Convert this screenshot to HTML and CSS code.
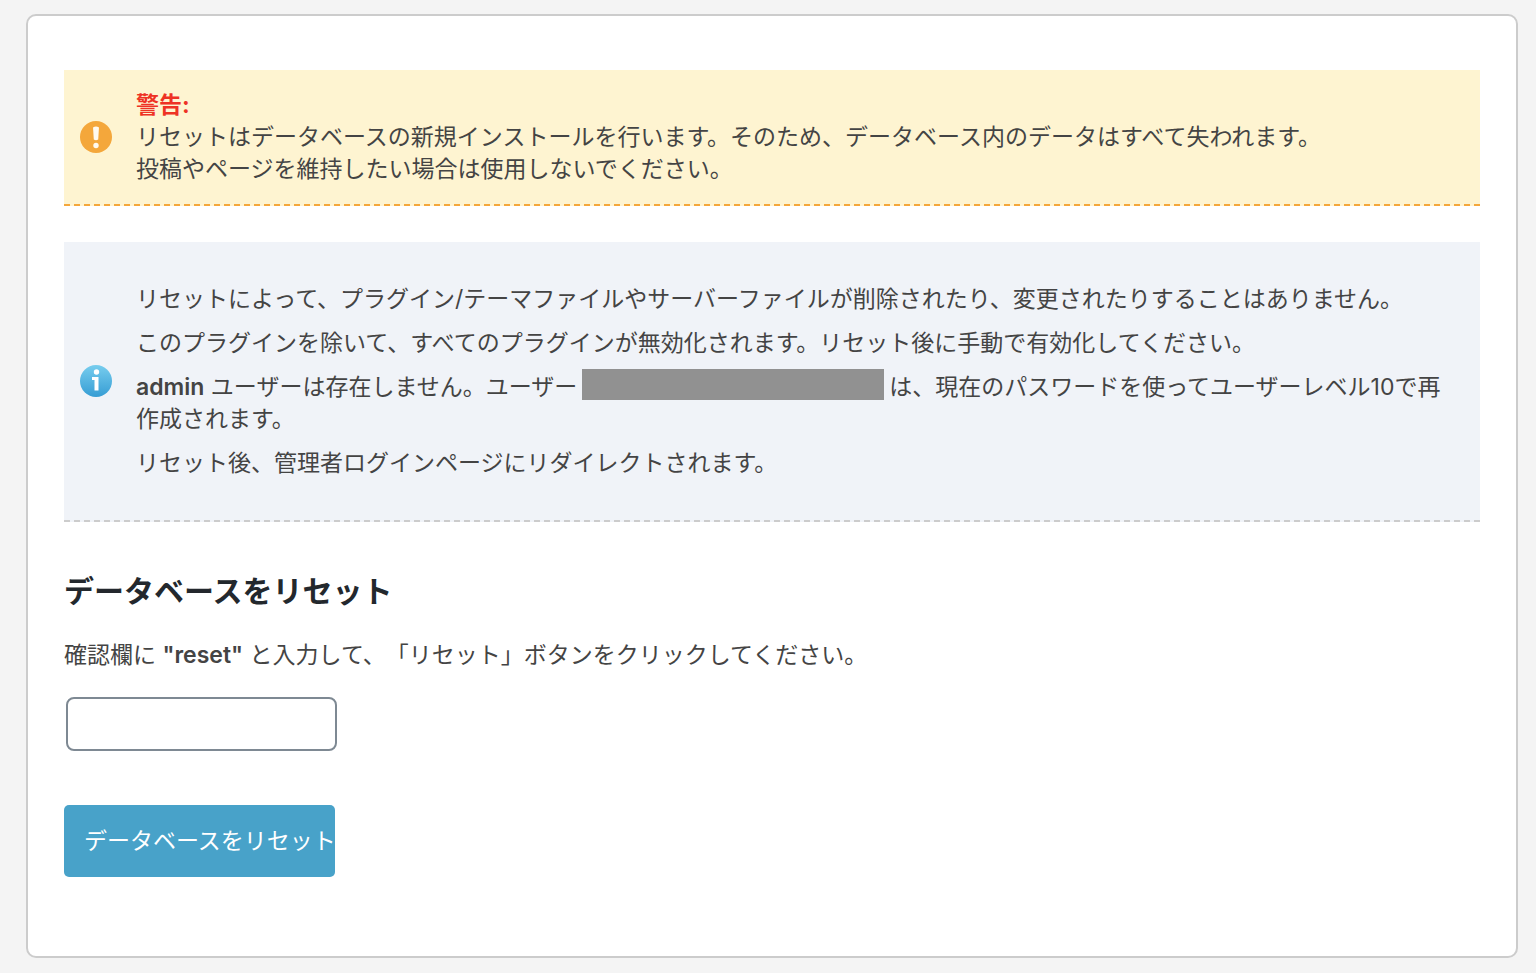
FILE: index.html
```
<!DOCTYPE html>
<html lang="ja">
<head>
  <meta charset="UTF-8" />
  <meta name="viewport" content="width=device-width, initial-scale=1.0"/>
  <title>データベースをリセット</title>
  <link rel="stylesheet" href="styles.css">
</head>
<body>
  <div class="card">
    <div class="notice warning">
      <svg class="icon" viewBox="0 0 34 34" aria-hidden="true">
        <circle cx="17" cy="17" r="16" fill="#f4a73b"/>
        <path d="M14 7.5Q17 5.5 20 7.5L19.2 19.5Q17 21 14.8 19.5Z" fill="#fffaf0"/>
        <circle cx="17" cy="25.5" r="2.7" fill="#fffaf0"/>
      </svg>
      <div class="notice-text">
        <strong class="alert">警告:</strong><br>
        リセットはデータベースの新規インストールを行います。そのため、データベース内のデータはすべて失われます。<br>
        投稿やページを維持したい場合は使用しないでください。
      </div>
    </div>

    <div class="notice info">
      <svg class="icon" viewBox="0 0 34 34" aria-hidden="true">
        <defs>
          <linearGradient id="infoBlue" x1="0" y1="0" x2="0" y2="1">
            <stop offset="0" stop-color="#77cdee"/>
            <stop offset="1" stop-color="#369dd4"/>
          </linearGradient>
        </defs>
        <circle cx="17" cy="17" r="16" fill="url(#infoBlue)"/>
        <circle cx="17.5" cy="8" r="2.7" fill="#fff"/>
        <path d="M13 13H19.5V26.5H15.5V16H13Z" fill="#fff"/>
      </svg>
      <div class="notice-text">
        <p>リセットによって、プラグイン/テーマファイルやサーバーファイルが削除されたり、変更されたりすることはありません。</p>
        <p>このプラグインを除いて、すべてのプラグインが無効化されます。リセット後に手動で有効化してください。</p>
        <p><strong>admin</strong> ユーザーは存在しません。ユーザー<span class="masked"></span>は、現在のパスワードを使ってユーザーレベル10で再作成されます。</p>
        <p>リセット後、管理者ログインページにリダイレクトされます。</p>
      </div>
    </div>

    <h2>データベースをリセット</h2>
    <form id="resetForm">
      <label for="confirm">確認欄に <strong>"reset"</strong> と入力して、「リセット」ボタンをクリックしてください。</label>
      <input type="text" id="confirm" autocomplete="off" />
      <button type="submit">データベースをリセット</button>
    </form>
  </div>
</body>
</html>
```
FILE: styles.css
```
* {
  box-sizing: border-box;
}

body {
  margin: 0;
  padding: 14px 18px 14px 26px;
  background-color: #f4f4f4;
  color: #444;
  font-family: Inter, "Noto Sans CJK JP", sans-serif;
  font-size: 23px;
  line-height: 32px;
  text-spacing-trim: space-all;
}

.card {
  padding: 54px 36px 79px;
  background-color: #fff;
  border: 2px solid #ccc;
  border-radius: 10px;
}

.notice {
  display: flex;
  align-items: center;
  gap: 23px;
  margin-bottom: 36px;
  padding: 19px 22px 19px 15px;
}

.warning {
  background-color: #fef4d1;
  border-bottom: 2px dashed #f4a73b;
}

.info {
  padding-top: 41px;
  padding-bottom: 41px;
  background-color: #f0f3f8;
  border-bottom: 2px dashed #ccc;
}

.icon {
  flex: none;
  width: 34px;
  height: 34px;
}

.notice-text {
  flex: 1;
}

.notice-text p {
  margin: 0 0 12px;
}

.notice-text p:last-child {
  margin-bottom: 0;
}

strong {
  font-weight: 600;
}

.alert {
  color: #ee3224;
  font-weight: 700;
}

.masked {
  display: inline-block;
  width: 302px;
  height: 31px;
  margin: -4px 5px;
  background-color: #919191;
  vertical-align: -1px;
}

h2 {
  margin: 51px 0 30px;
  color: #23282d;
  font-size: 30px;
  font-weight: 700;
  line-height: 36px;
}

label {
  display: block;
}

input[type="text"] {
  display: block;
  width: 271px;
  height: 54px;
  margin: 26px 2px 54px;
  padding: 0 16px;
  border: 2px solid #7e8993;
  border-radius: 8px;
  background-color: #fff;
  color: #444;
  font: inherit;
}

button {
  display: block;
  width: 271px;
  height: 72px;
  padding: 0 0 0 20px;
  overflow: hidden;
  border: none;
  border-radius: 5px;
  background-color: #48a2c9;
  color: #fff;
  font: inherit;
  text-align: left;
  white-space: nowrap;
  cursor: pointer;
}

button:hover {
  background-color: #3990b6;
}
```
